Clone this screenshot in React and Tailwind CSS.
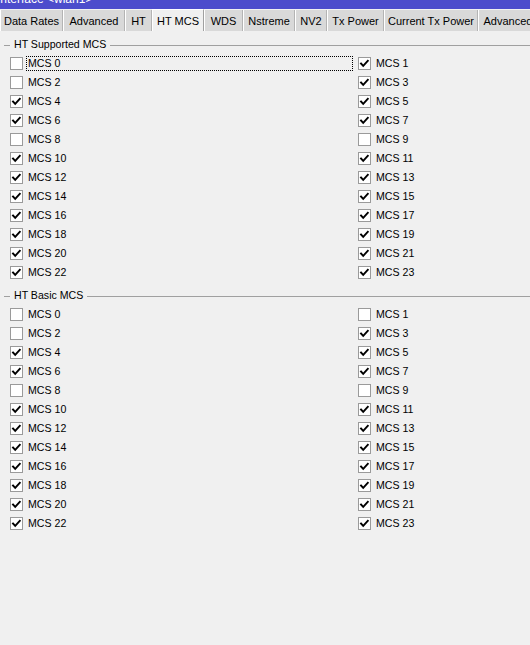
import React from "react";

const tabs = [
  { label: "Data Rates", w: 63 },
  { label: "Advanced", w: 62 },
  { label: "HT", w: 27 },
  { label: "HT MCS", w: 52, active: true },
  { label: "WDS", w: 39 },
  { label: "Nstreme", w: 52 },
  { label: "NV2", w: 32 },
  { label: "Tx Power", w: 57 },
  { label: "Current Tx Power", w: 94 },
  { label: "Advanced", w: 60 },
];

const supported = {
  left: [false, false, true, true, false, true, true, true, true, true, true, true],
  right: [true, true, true, true, false, true, true, true, true, true, true, true],
};
const basic = {
  left: [false, false, true, true, false, true, true, true, true, true, true, true],
  right: [false, true, true, true, false, true, true, true, true, true, true, true],
};

function Box({ checked }) {
  return (
    <div className="w-[13px] h-[13px] shrink-0 border border-[#9a9a9a] bg-white flex items-center justify-center">
      {checked && (
        <svg width="11" height="11" viewBox="0 0 11 11">
          <polyline points="2,5.5 4.2,7.8 8.8,2.8" fill="none" stroke="#000" strokeWidth="1.9" strokeLinecap="square" />
        </svg>
      )}
    </div>
  );
}

function Row({ n, checked, focus }) {
  return (
    <div className="h-[19px] flex items-center">
      <Box checked={checked} />
      {focus ? (
        <div className="ml-[3px] w-[327px] h-[15px] border border-dotted border-black flex items-center pl-[1px]">
          MCS {n}
        </div>
      ) : (
        <div className="ml-[5px]">MCS {n}</div>
      )}
    </div>
  );
}

function Group({ title, data, focus }) {
  return (
    <div>
      <div className="h-[18px] flex items-center">
        <div className="w-[6px] ml-[4px] border-t border-[#a0a0a0]" />
        <div className="px-[4px]">{title}</div>
        <div className="flex-1 border-t border-[#a0a0a0]" />
      </div>
      <div className="grid grid-cols-[349px_1fr] pl-[10px]">
        <div>
          {data.left.map((c, i) => (
            <Row key={i} n={i * 2} checked={c} focus={focus && i === 0} />
          ))}
        </div>
        <div className="-ml-[1px]">
          {data.right.map((c, i) => (
            <Row key={i} n={i * 2 + 1} checked={c} />
          ))}
        </div>
      </div>
    </div>
  );
}

export default function App() {
  return (
    <div
      className="w-[530px] h-[645px] bg-[#f0f0f0] text-[10.6px] text-black overflow-hidden"
      style={{ fontFamily: '"Liberation Sans", Arial, sans-serif' }}
    >
      <div className="h-[9px] bg-[#4c4ccc] overflow-hidden relative">
        <div className="absolute left-[-3px] top-[-8px] text-white text-[12px] leading-[14px] whitespace-nowrap">
          Interface &lt;wlan1&gt;
        </div>
      </div>
      <div className="h-[22px] flex items-stretch bg-[#f0f0f0] overflow-hidden whitespace-nowrap text-[11px]">
        {tabs.map((t, i) =>
          t.active ? (
            <div
              key={i}
              className="shrink-0 bg-[#f0f0f0] border-t border-l border-r border-t-white border-l-white border-r-[#a0a0a0] flex items-center justify-center pt-[1px]"
              style={{ width: t.w }}
            >
              {t.label}
            </div>
          ) : (
            <div
              key={i}
              className="shrink-0 mt-[1px] bg-[#d9d9d9] border-l border-r border-l-white border-r-[#b4b4b4] flex items-center justify-center pt-[1px]"
              style={{ width: t.w }}
            >
              {t.label}
            </div>
          )
        )}
      </div>
      <div className="pt-[5px]">
        <Group title="HT Supported MCS" data={supported} focus />
        <div className="h-[5px]" />
        <Group title="HT Basic MCS" data={basic} />
      </div>
    </div>
  );
}
